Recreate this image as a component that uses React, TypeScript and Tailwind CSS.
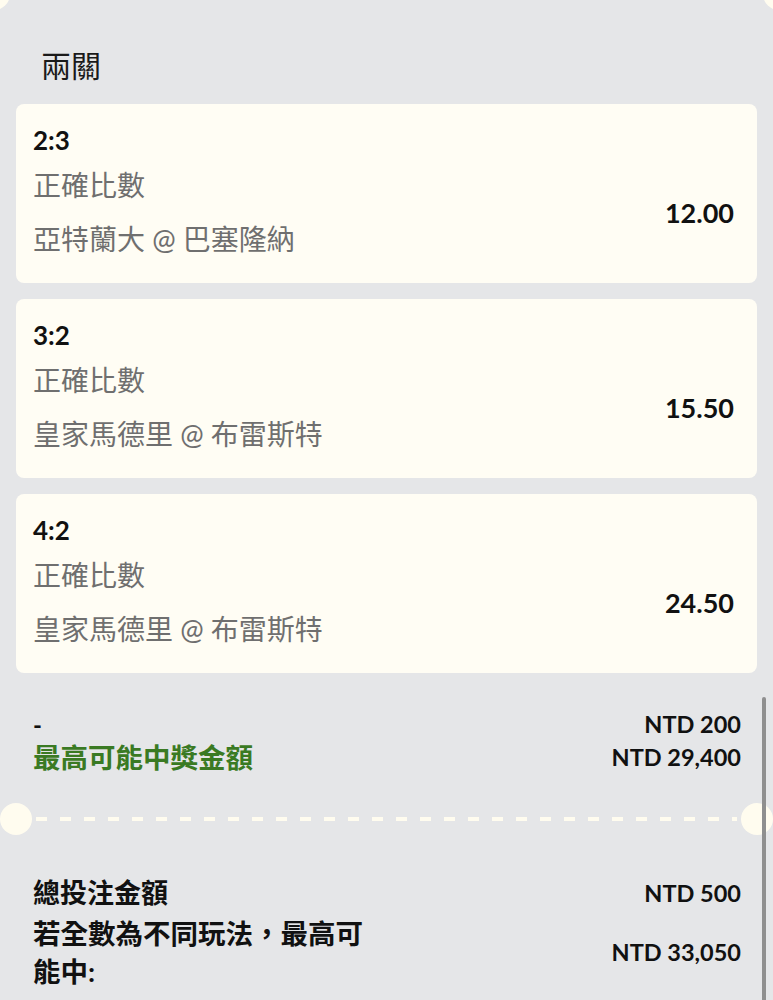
const legs = [
  { score: "2:3", market: "正確比數", match: "亞特蘭大 @ 巴塞隆納", odds: "12.00" },
  { score: "3:2", market: "正確比數", match: "皇家馬德里 @ 布雷斯特", odds: "15.50" },
  { score: "4:2", market: "正確比數", match: "皇家馬德里 @ 布雷斯特", odds: "24.50" },
];

const LegCard = ({ score, market, match, odds }: (typeof legs)[number]) => (
  <div className="flex h-[179px] rounded-lg bg-[#fffdf4] pl-[17px] pr-[23px]">
    <div className="flex flex-1 flex-col pt-[20px]">
      <div className="text-[26px] font-bold leading-[32px] text-[#111]">{score}</div>
      <div className="mt-[9px] text-[28px] leading-[40px] text-[#6f6f6f]">{market}</div>
      <div className="mt-[14px] text-[28px] leading-[40px] text-[#6f6f6f]">{match}</div>
    </div>
    <div className="flex items-center pt-[39px]">
      <span className="text-[27px] font-bold text-[#111]">{odds}</span>
    </div>
  </div>
);

export default function App() {
  return (
    <div className="relative min-h-[1000px] overflow-hidden bg-[#e5e6e8] font-['Lato','Noto_Sans_CJK_TC',sans-serif]">
      {/* notches from the section above */}
      <div className="absolute left-[-22px] top-[-22px] h-8 w-8 rounded-full bg-[#fffcef]" />
      <div className="absolute right-[-22px] top-[-22px] h-8 w-8 rounded-full bg-[#fffcef]" />

      <div className="pl-[41px] pt-[45px] text-[30px] leading-[40px] text-[#1a1a1a]">兩關</div>

      <div className="mt-[19px] flex flex-col gap-4 px-4">
        {legs.map((leg, i) => (
          <LegCard key={i} {...leg} />
        ))}
      </div>

      <div className="mt-[35px] flex justify-between pl-[33px] pr-[32px]">
        <div className="flex flex-col">
          <span className="text-[24px] font-bold leading-[33px] text-[#111]">-</span>
          <span className="text-[27.5px] font-bold leading-[33px] text-[#3a7a23]">最高可能中獎金額</span>
        </div>
        <div className="flex flex-col items-end text-[23.5px] font-bold leading-[33px] text-[#111]">
          <span>NTD 200</span>
          <span>NTD 29,400</span>
        </div>
      </div>

      {/* perforation */}
      <div className="mt-[29px] flex items-center">
        <div className="h-8 w-8 shrink-0 rounded-full bg-[#fffcef]" />
        <div className="mx-1 h-[4px] flex-1 bg-[repeating-linear-gradient(90deg,#fffcef_0px,#fffcef_11px,transparent_11px,transparent_24px)]" />
        <div className="h-8 w-8 shrink-0 rounded-full bg-[#fffcef]" />
      </div>

      <div className="mt-[38px] pl-[33px] pr-[32px] font-bold text-[#111]">
        <div className="flex justify-between">
          <span className="text-[27px] leading-[40px]">總投注金額</span>
          <span className="text-[23.5px] leading-[40px]">NTD 500</span>
        </div>
        <div className="mt-[2px] flex items-center justify-between">
          <span className="w-[340px] text-[27.5px] leading-[38px]">若全數為不同玩法，最高可能中:</span>
          <span className="text-[23.5px]">NTD 33,050</span>
        </div>
      </div>

      {/* scrollbar */}
      <div className="absolute left-[762px] top-[697px] h-[320px] w-[4px] rounded-full bg-[#8f8f8f]" />
    </div>
  );
}
